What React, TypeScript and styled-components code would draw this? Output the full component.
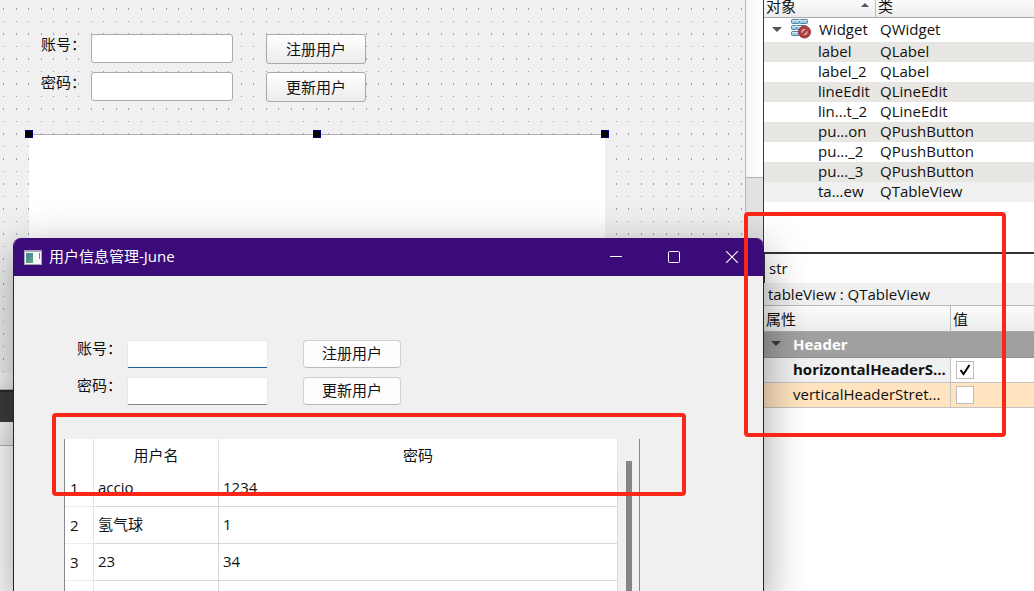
import React from 'react';
import styled, { createGlobalStyle } from 'styled-components';

const GlobalStyle = createGlobalStyle`
  *, *::before, *::after { box-sizing: border-box; }
  body {
    margin: 0;
    background: #ffffff;
    color: #111111;
    font-family: "Open Sans", "Noto Sans CJK SC", sans-serif;
    font-size: 15px;
    line-height: 20px;
  }
  input, button { font: inherit; color: inherit; }
`;

const Desktop = styled.div`
  position: relative;
  display: grid;
  grid-template-columns: minmax(0, 1fr) 18px 271px;
  height: 100vh;
  min-height: 520px;
  overflow: hidden;
`;

/* Designer canvas */

const Editor = styled.main`
  display: flex;
  flex-direction: column;
  min-width: 0;
`;

const dot = (height: number) =>
  `conic-gradient(at 1px ${height}px, transparent 270deg, #a0a0a0 0)`;

const Canvas = styled.section`
  height: 373px;
  flex: none;
  padding-top: 34px;
  background-color: #f0f0f0;
  background-image: ${dot(2)}, ${dot(2)}, ${dot(1)}, ${dot(1)};
  background-size: 25px 25px;
  background-position: 3px 8px, 16px 8px, 3px 21px, 16px 21px;
`;

const StatusStrip = styled.div<{ $height: number; $dark?: boolean }>`
  flex: none;
  height: ${(p) => p.$height}px;
  background: ${(p) => (p.$dark ? '#3c3c3e' : 'linear-gradient(#fafafa, #ececec)')};
  border-bottom: ${(p) => (p.$dark ? 'none' : '1px solid #b4b4b4')};
  border-top: ${(p) => (p.$dark ? '2px solid #2a2a2a' : 'none')};
`;

const DesignForm = styled.form`
  display: grid;
  grid-template-columns: 50px 142px 100px;
  grid-auto-rows: 30px;
  row-gap: 8px;
  margin-left: 41px;
`;

const DesignInput = styled.input`
  height: 29px;
  width: 100%;
  padding: 0 6px;
  background: #ffffff;
  border: 1px solid #ababab;
  border-radius: 3px;
  outline: none;
`;

const DesignButton = styled.button`
  width: 100px;
  margin-left: 33px;
  padding: 0;
  background: linear-gradient(#ffffff, #ececec);
  border: 1px solid #a8a8a8;
  border-radius: 3px;
`;

const Selection = styled.div`
  position: relative;
  width: 576px;
  height: 300px;
  margin: 32px 0 0 29px;
  background: #ffffff;
  border-top: 1px solid #b0b0b0;
`;

const Handle = styled.span<{ $at: number }>`
  position: absolute;
  top: -5px;
  left: ${(p) => p.$at}%;
  width: 8px;
  height: 8px;
  margin-left: -4px;
  background: #000000;
  border: 1px solid #00007c;
`;

const ScrollTrack = styled.div`
  border-left: 1px solid #b8b8b8;
  background: #e2e2e2;
`;

const ScrollThumb = styled.div`
  height: 178px;
  background: linear-gradient(90deg, #f4f4f4, #ffffff);
  border-bottom: 1px solid #b4b4b4;
`;

/* Inspector */

const Inspector = styled.aside`
  display: flex;
  flex-direction: column;
  min-width: 0;
  background: #ffffff;
`;

const ObjectTree = styled.section`
  flex: none;
  height: 252px;
  border-left: 1px solid #3a3a3a;
  overflow: hidden;
`;

const Grid = styled.table`
  width: 100%;
  table-layout: fixed;
  border-collapse: separate;
  border-spacing: 0;
`;

const HeadCell = styled.th<{ $compact?: boolean; $last?: boolean }>`
  height: ${(p) => (p.$compact ? 18 : 26)}px;
  padding: ${(p) => (p.$compact ? '0 2px 4px' : '0 2px')};
  text-align: left;
  font-weight: 400;
  line-height: ${(p) => (p.$compact ? 13 : 20)}px;
  background: linear-gradient(#fbfbfb, #ececec);
  border-bottom: 1px solid #a9a9a9;
  border-right: ${(p) => (p.$last ? 'none' : '1px solid #bdbdbd')};
  white-space: nowrap;
`;

const HeadContent = styled.span`
  display: flex;
  justify-content: space-between;
  align-items: flex-start;
  padding-right: 3px;
`;

const TreeRow = styled.tr<{ $tone: string }>`
  background: ${(p) => p.$tone};
`;

const TreeCell = styled.td<{ $indent: number; $root?: boolean }>`
  height: ${(p) => (p.$root ? 24 : 20)}px;
  padding: 0 0 2px ${(p) => p.$indent}px;
  line-height: 18px;
  white-space: nowrap;
`;

const RootContent = styled.span`
  display: flex;
  align-items: center;
  gap: 8px;
`;

const FilterInput = styled.input`
  flex: none;
  width: 100%;
  height: 31px;
  padding: 0 5px 2px 4px;
  background: #ffffff;
  border: solid #333333;
  border-width: 2px 0 0 2px;
  outline: none;
`;

const ObjectLine = styled.div`
  flex: none;
  height: 23px;
  padding-left: 5px;
  line-height: 23px;
  background: #f0f0f0;
  border-bottom: 1px solid #b8b8b8;
`;

const Properties = styled.section`
  padding: 0 0 0 1px;
`;

const GroupCell = styled.th`
  height: 26px;
  padding: 0 0 2px;
  text-align: left;
  font-weight: 700;
  color: #ffffff;
  background: #a0a0a0;
  border-bottom: 1px solid #8e8e8e;
`;

const GroupContent = styled.span`
  display: flex;
  align-items: center;
  gap: 12px;
  padding-left: 7px;
`;

const PropName = styled.td<{ $tone: string; $bold?: boolean }>`
  height: 25px;
  padding: 0 0 2px 29px;
  background: ${(p) => p.$tone};
  font-weight: ${(p) => (p.$bold ? 700 : 400)};
  border-bottom: 1px solid #c4c4c4;
  border-right: 1px solid #c4c4c4;
  white-space: nowrap;
  overflow: hidden;
`;

const PropValue = styled.td<{ $tone: string }>`
  height: 25px;
  padding: 0 0 0 5px;
  background: ${(p) => p.$tone};
  border-bottom: 1px solid #c4c4c4;
`;

const TickWrap = styled.label`
  position: relative;
  display: block;
  width: 18px;
  height: 18px;

  svg {
    position: absolute;
    inset: 0;
    pointer-events: none;
  }
`;

const Tick = styled.input`
  appearance: none;
  display: block;
  width: 18px;
  height: 18px;
  margin: 0;
  background: #ffffff;
  border: 1px solid #bdbdbd;
`;

/* Running application window */

const AppWindow = styled.section`
  position: absolute;
  top: 238px;
  right: 270px;
  bottom: -10px;
  left: 13px;
  display: flex;
  flex-direction: column;
  background: #f0f0f0;
  border: solid #3b0c79;
  border-width: 0 1px;
  border-radius: 8px 8px 0 0;
  box-shadow: 0 12px 44px rgba(0, 0, 0, 0.38);
  overflow: hidden;
`;

const TitleBar = styled.header`
  flex: none;
  display: flex;
  align-items: center;
  height: 38px;
  padding: 0 2px 0 10px;
  background: #3b0c79;
  color: #ffffff;
`;

const Title = styled.h1`
  flex: 1;
  margin: 0 0 0 7px;
  padding-bottom: 2px;
  font-size: 15px;
  font-weight: 400;
`;

const WindowButton = styled.button`
  display: grid;
  place-items: center;
  width: 58px;
  height: 38px;
  padding: 0;
  background: none;
  border: none;
`;

const LoginForm = styled.form`
  flex: none;
  display: grid;
  grid-template-columns: 50px 141px 98px;
  grid-auto-rows: 28px;
  row-gap: 9px;
  padding: 64px 0 0 63px;
  line-height: 16px;
`;

const LineInput = styled.input<{ $active?: boolean }>`
  width: 100%;
  height: 28px;
  padding: 0 6px;
  background: #ffffff;
  border: 1px solid #e8e8e8;
  border-bottom-color: ${(p) => (p.$active ? '#1a5fa0' : '#868686')};
  border-radius: 2px;
  outline: none;
`;

const PushButton = styled.button`
  width: 98px;
  margin-left: 35px;
  padding: 0 0 2px;
  background: #fdfdfd;
  border: 1px solid #d0d0d0;
  border-bottom-color: #bcbcbc;
  border-radius: 4px;
`;

const TableFrame = styled.div`
  flex: 1;
  display: flex;
  min-height: 0;
  width: 576px;
  margin: 34px 0 0 50px;
  background: #ffffff;
  border: solid #858890;
  border-width: 0 1px;
  overflow: hidden;
`;

const TableArea = styled.div`
  flex: 1;
  min-width: 0;
`;

const ColumnHead = styled.th`
  height: 31px;
  padding: 0;
  font-weight: 400;
  border-right: 1px solid #e4e4e4;
`;

const RowHead = styled.th`
  height: 37px;
  padding: 0 0 0 5px;
  text-align: left;
  font-weight: 400;
  border-right: 1px solid #e4e4e4;
  border-bottom: 1px solid #ececec;
`;

const DataCell = styled.td`
  height: 37px;
  padding: 0 4px 3px;
  border-right: 1px solid #d8d8d8;
  border-bottom: 1px solid #d8d8d8;
`;

const TableScroll = styled.div`
  width: 21px;
  padding: 22px 7px 0 8px;
  background: #f0f0f0;
`;

const TableThumb = styled.div`
  height: 100%;
  background: #868686;
`;

/* Red callout frames */

const Callout = styled.div`
  position: absolute;
  border: 4px solid #f92718;
  border-radius: 4px;
  pointer-events: none;
`;

const TableCallout = styled(Callout)`
  top: 413px;
  right: 348px;
  left: 52px;
  height: 83px;
`;

const PropertyCallout = styled(Callout)`
  top: 212px;
  right: 28px;
  width: 262px;
  height: 225px;
`;

const Triangle = ({ up, color = '#555555' }: { up?: boolean; color?: string }) => (
  <svg width="10" height="9" viewBox="0 0 10 9" aria-hidden="true">
    <path d={up ? 'M1 7 5 3l4 4z' : 'M0 2h10L5 7z'} fill={color} />
  </svg>
);

const WidgetIcon = () => (
  <svg width="21" height="20" viewBox="0 0 21 20" aria-hidden="true">
    <g stroke="#55809f" fill="#9ccbe8">
      <rect x="1.5" y="0.5" width="8" height="4" rx="1" />
      <rect x="9.5" y="0.5" width="8" height="4" rx="1" />
      <rect x="1.5" y="6.5" width="5" height="4" rx="1" />
      <rect x="6.5" y="6.5" width="10" height="4" rx="1" />
      <rect x="1.5" y="12.5" width="8" height="4" rx="1" />
    </g>
    <path d="M2 1.5h15M2 7.5h14M2 13.5h7" stroke="#d3eaf8" />
    <circle cx="14.5" cy="13" r="6" fill="#b04040" stroke="#8f3535" />
    <circle cx="14.5" cy="13" r="3.2" fill="#cf9a9a" />
    <path d="m12 15.5 5-5" stroke="#a83636" strokeWidth="2" />
  </svg>
);

const AppIcon = () => (
  <svg width="18" height="15" viewBox="0 0 18 15" aria-hidden="true">
    <defs>
      <linearGradient id="pane" x1="0" y1="0" x2="1" y2="1">
        <stop offset="0" stopColor="#4878a0" />
        <stop offset="1" stopColor="#5fae7c" />
      </linearGradient>
    </defs>
    <rect width="18" height="15" fill="#a6a8b2" />
    <rect x="1" y="2" width="16" height="12" fill="#f6f8f8" />
    <rect x="2" y="3" width="7" height="10" fill="url(#pane)" />
    <rect x="15" y="3" width="1" height="6" fill="#4f9c86" />
  </svg>
);

const CheckMark = () => (
  <svg width="18" height="18" viewBox="0 0 18 18" aria-hidden="true">
    <path d="M4.5 9 7.5 13 13.5 4" fill="none" stroke="#000000" strokeWidth="2" />
  </svg>
);

const objects = [
  ['label', 'QLabel'],
  ['label_2', 'QLabel'],
  ['lineEdit', 'QLineEdit'],
  ['lin...t_2', 'QLineEdit'],
  ['pu...on', 'QPushButton'],
  ['pu..._2', 'QPushButton'],
  ['pu..._3', 'QPushButton'],
  ['ta...ew', 'QTableView'],
];

const users = [
  ['accio', '1234'],
  ['氢气球', '1'],
  ['23', '34'],
];

const rowTone = (index: number) => {
  if (index === objects.length - 1) return '#f0f0f0';
  return index % 2 === 0 ? '#e8e6e2' : '#ffffff';
};

export default function App() {
  return (
    <Desktop lang="zh-CN">
      <GlobalStyle />
      <Editor>
        <Canvas>
          <DesignForm onSubmit={(e) => e.preventDefault()}>
            <label htmlFor="design-account">账号：</label>
            <DesignInput id="design-account" />
            <DesignButton type="button">注册用户</DesignButton>
            <label htmlFor="design-password">密码：</label>
            <DesignInput id="design-password" />
            <DesignButton type="button">更新用户</DesignButton>
          </DesignForm>
          <Selection>
            <Handle $at={0} />
            <Handle $at={50} />
            <Handle $at={100} />
          </Selection>
        </Canvas>
        <StatusStrip $height={17} />
        <StatusStrip $height={32} $dark />
        <StatusStrip $height={24} />
      </Editor>

      <ScrollTrack>
        <ScrollThumb />
      </ScrollTrack>

      <Inspector>
        <ObjectTree>
          <Grid>
            <colgroup>
              <col style={{ width: 112 }} />
              <col />
            </colgroup>
            <thead>
              <tr>
                <HeadCell $compact>
                  <HeadContent>
                    对象
                    <Triangle up />
                  </HeadContent>
                </HeadCell>
                <HeadCell $compact $last>类</HeadCell>
              </tr>
            </thead>
            <tbody>
              <TreeRow $tone="#ffffff">
                <TreeCell $indent={8} $root>
                  <RootContent>
                    <Triangle />
                    <WidgetIcon />
                    Widget
                  </RootContent>
                </TreeCell>
                <TreeCell $indent={4} $root>QWidget</TreeCell>
              </TreeRow>
              {objects.map(([name, type], i) => (
                <TreeRow key={name} $tone={rowTone(i)}>
                  <TreeCell $indent={54}>{name}</TreeCell>
                  <TreeCell $indent={4}>{type}</TreeCell>
                </TreeRow>
              ))}
            </tbody>
          </Grid>
        </ObjectTree>

        <FilterInput aria-label="Filter" defaultValue="str" />
        <ObjectLine>tableView : QTableView</ObjectLine>
        <Properties>
          <Grid>
            <colgroup>
              <col style={{ width: 187 }} />
              <col />
            </colgroup>
            <thead>
              <tr>
                <HeadCell>属性</HeadCell>
                <HeadCell $last>值</HeadCell>
              </tr>
            </thead>
            <tbody>
              <tr>
                <GroupCell colSpan={2}>
                  <GroupContent>
                    <Triangle color="#3a3a3a" />
                    Header
                  </GroupContent>
                </GroupCell>
              </tr>
              <tr>
                <PropName $tone="#f0f0f0" $bold>horizontalHeaderS...</PropName>
                <PropValue $tone="#ffffff">
                  <TickWrap>
                    <Tick type="checkbox" defaultChecked aria-label="horizontalHeaderS..." />
                    <CheckMark />
                  </TickWrap>
                </PropValue>
              </tr>
              <tr>
                <PropName $tone="#ffe4bf">verticalHeaderStret...</PropName>
                <PropValue $tone="#ffe4bf">
                  <TickWrap>
                    <Tick type="checkbox" aria-label="verticalHeaderStret..." />
                  </TickWrap>
                </PropValue>
              </tr>
            </tbody>
          </Grid>
        </Properties>
      </Inspector>

      <AppWindow>
        <TitleBar>
          <AppIcon />
          <Title>用户信息管理-June</Title>
          <WindowButton type="button" aria-label="最小化">
            <svg width="12" height="12" viewBox="0 0 12 12">
              <path d="M0 5.5h12" stroke="#ffffff" />
            </svg>
          </WindowButton>
          <WindowButton type="button" aria-label="最大化">
            <svg width="12" height="12" viewBox="0 0 12 12">
              <rect x="0.5" y="0.5" width="11" height="11" rx="1" fill="none" stroke="#ffffff" />
            </svg>
          </WindowButton>
          <WindowButton type="button" aria-label="关闭">
            <svg width="12" height="12" viewBox="0 0 12 12">
              <path d="m0 0 12 12M12 0 0 12" stroke="#ffffff" strokeWidth="1.1" />
            </svg>
          </WindowButton>
        </TitleBar>
        <LoginForm onSubmit={(e) => e.preventDefault()}>
          <label htmlFor="account">账号：</label>
          <LineInput id="account" $active />
          <PushButton type="button">注册用户</PushButton>
          <label htmlFor="password">密码：</label>
          <LineInput id="password" type="password" />
          <PushButton type="button">更新用户</PushButton>
        </LoginForm>
        <TableFrame>
          <TableArea>
            <Grid>
              <colgroup>
                <col style={{ width: 29 }} />
                <col style={{ width: 125 }} />
                <col />
              </colgroup>
              <thead>
                <tr>
                  <ColumnHead />
                  <ColumnHead scope="col">用户名</ColumnHead>
                  <ColumnHead scope="col">密码</ColumnHead>
                </tr>
              </thead>
              <tbody>
                {users.map(([name, password], i) => (
                  <tr key={name}>
                    <RowHead scope="row">{i + 1}</RowHead>
                    <DataCell>{name}</DataCell>
                    <DataCell>{password}</DataCell>
                  </tr>
                ))}
                <tr>
                  <RowHead />
                  <DataCell />
                  <DataCell />
                </tr>
              </tbody>
            </Grid>
          </TableArea>
          <TableScroll>
            <TableThumb />
          </TableScroll>
        </TableFrame>
      </AppWindow>

      <TableCallout />
      <PropertyCallout />
    </Desktop>
  );
}
